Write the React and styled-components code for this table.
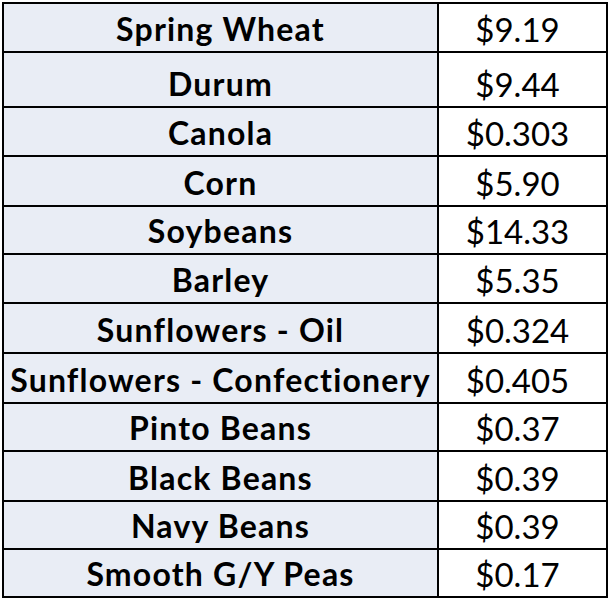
import React from 'react';
import styled, { createGlobalStyle } from 'styled-components';

const GlobalStyle = createGlobalStyle`
  body {
    margin: 0;
    background: #fff;
  }
`;

const Wrapper = styled.div`
  padding: 2px 0 0 2px;
`;

const Table = styled.div`
  display: grid;
  grid-template-columns: 435px 169px;
  width: 604px;
  border-top: 2px solid #000;
  border-left: 2px solid #000;
`;

const Cell = styled.div`
  height: ${props => props.h}px;
  border-right: 2px solid #000;
  border-bottom: 2px solid #000;
  display: flex;
  align-items: flex-end;
  justify-content: center;
  padding-bottom: 5px;
  box-sizing: content-box;
  color: #000;
  line-height: 1;
  overflow: hidden;
`;

const NameCell = styled(Cell)`
  background: #e9edf5;
  font-family: Lato, "Liberation Sans", sans-serif;
  font-weight: 700;
  font-size: 32px;
  letter-spacing: 1.2px;
  padding-bottom: 6px;
`;

const PriceCell = styled(Cell)`
  background: #fff;
  font-family: Lato, "Liberation Sans", sans-serif;
  font-weight: 400;
  font-size: 33px;
  padding-right: 10px;
  width: 157px;
`;

const rows = [
  ['Spring Wheat', '$9.19', 49],
  ['Durum', '$9.44', 55],
  ['Canola', '$0.303', 49],
  ['Corn', '$5.90', 50],
  ['Soybeans', '$14.33', 48],
  ['Barley', '$5.35', 49],
  ['Sunflowers - Oil', '$0.324', 50],
  ['Sunflowers - Confectionery', '$0.405', 50],
  ['Pinto Beans', '$0.37', 48],
  ['Black Beans', '$0.39', 50],
  ['Navy Beans', '$0.39', 48],
  ['Smooth G/Y Peas', '$0.17', 48],
];

const App = () => (
  <Wrapper>
    <GlobalStyle />
    <Table>
      {rows.map(([name, price, h]) => (
        <React.Fragment key={name}>
          <NameCell h={h - 8}>{name}</NameCell>
          <PriceCell h={h - 7}>{price}</PriceCell>
        </React.Fragment>
      ))}
    </Table>
  </Wrapper>
);

export default App;
